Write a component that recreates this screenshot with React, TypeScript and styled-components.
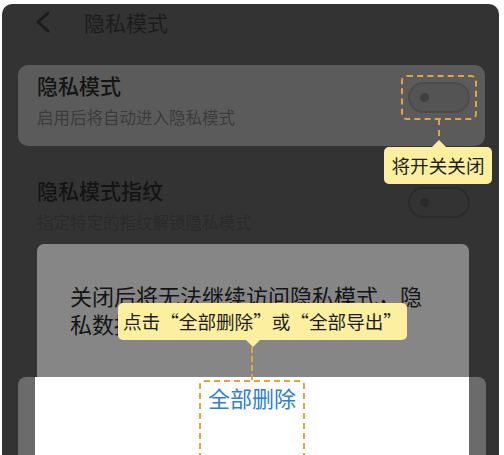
import React from "react";
import styled, { createGlobalStyle, css } from "styled-components";

const GlobalStyle = createGlobalStyle`
  html, body { margin: 0; padding: 0; background: #ffffff; }
  body { font-family: "Noto Sans CJK SC", "Noto Sans", sans-serif; }
  * { box-sizing: border-box; }
`;

const ORANGE = "#e2a445";
const YELLOW = "#fcefa0";

const Screen = styled.div`
  position: relative;
  margin: 4px 5px 0 2px;
  height: 451px;
  background: #333333;
  border-radius: 10px 10px 0 0;
  overflow: hidden;
`;

const Header = styled.div`
  display: flex;
  align-items: center;
  height: 36px;
  padding-left: 33px;
  gap: 33px;
`;

const Title = styled.div`
  font-size: 21px;
  line-height: 28px;
  color: #1c1c1c;
`;

const SettingCard = styled.div<{ $active?: boolean }>`
  display: flex;
  justify-content: space-between;
  align-items: flex-start;
  margin: ${(p) => (p.$active ? "25px" : "24px")} 14px 0 16px;
  padding: 6px 8px 17px 19px;
  border-radius: 10px;
  background: ${(p) => (p.$active ? "#5b5b5b" : "transparent")};
`;

const TextBlock = styled.div`
  display: flex;
  flex-direction: column;
`;

const ItemTitle = styled.div`
  font-size: 21px;
  line-height: 28px;
  font-weight: 500;
  color: #141414;
`;

const ItemSub = styled.div<{ $active?: boolean }>`
  margin-top: 6px;
  font-size: 16.5px;
  line-height: 24px;
  color: ${(p) => (p.$active ? "#3c3c3c" : "#2a2a2a")};
`;

const Highlight = styled.div<{ $on?: boolean }>`
  position: relative;
  margin-top: 4px;
  padding: 5px 5px;
  border: 2px dashed ${(p) => (p.$on ? ORANGE : "transparent")};
  border-radius: 6px;
`;

const Switch = styled.div<{ $active?: boolean }>`
  position: relative;
  width: 62px;
  height: 31px;
  border-radius: 16px;
  border: 2px solid ${(p) => (p.$active ? "#4c4c4c" : "#2b2b2b")};
  background: ${(p) => (p.$active ? "#545454" : "#333333")};
  &::after {
    content: "";
    position: absolute;
    left: 10px;
    top: 50%;
    width: 9px;
    height: 9px;
    margin-top: -4.5px;
    border-radius: 50%;
    background: ${(p) => (p.$active ? "#404040" : "#2a2a2a")};
  }
`;

const Connector = styled.div<{ $left: number; $top: number; $h: number }>`
  position: absolute;
  left: ${(p) => p.$left}px;
  top: ${(p) => p.$top}px;
  height: ${(p) => p.$h}px;
  border-left: 2px dashed ${ORANGE};
`;

const Tooltip = styled.div<{
  $left: number;
  $top: number;
  $w: number;
  $arrow: "up" | "down";
  $arrowX: number;
}>`
  position: absolute;
  z-index: 3;
  left: ${(p) => p.$left}px;
  top: ${(p) => p.$top}px;
  width: ${(p) => p.$w}px;
  height: 37px;
  text-align: center;
  background: ${YELLOW};
  border-radius: 5px;
  color: #1e1e1e;
  font-size: 18.6px;
  line-height: 36px;
  white-space: nowrap;
  &::before {
    content: "";
    position: absolute;
    left: ${(p) => p.$arrowX - 7}px;
    border-left: 7px solid transparent;
    border-right: 7px solid transparent;
    ${(p) =>
      p.$arrow === "up"
        ? css`
            top: -7px;
            border-bottom: 7px solid ${YELLOW};
          `
        : css`
            bottom: -7px;
            border-top: 7px solid ${YELLOW};
          `}
  }
`;

const Dialog = styled.div`
  position: absolute;
  left: 35px;
  right: 30px;
  top: 240px;
  bottom: 0;
  padding: 37px 33px 0 33px;
  background: #868686;
  border-radius: 7px 7px 0 0;
  font-size: 22px;
  line-height: 28px;
  color: #141414;
`;

const BottomSheet = styled.div`
  position: absolute;
  left: 16px;
  right: 13px;
  top: 373px;
  bottom: 0;
  display: flex;
  padding: 0 17px;
  background: #6b6b6b;
  border-radius: 8px 8px 0 0;
`;

const SheetBody = styled.div`
  flex: 1;
  display: flex;
  justify-content: center;
  align-items: flex-start;
  padding-top: 3px;
  background: #ffffff;
`;

const ActionBox = styled.div`
  position: relative;
  height: 110px;
  padding: 1px 7px 0;
  border: 2px dashed ${ORANGE};
  border-radius: 5px 5px 0 0;
`;

const ActionText = styled.div`
  font-size: 22px;
  line-height: 28px;
  color: #2e7fd2;
`;

export default function App() {
  return (
    <>
      <GlobalStyle />
      <Screen lang="zh-CN">
        <Header>
          <svg width="16" height="22" viewBox="0 0 16 22" fill="none">
            <path d="M13 2 L3 11 L13 20" stroke="#1b1b1b" strokeWidth="2.8" strokeLinecap="round" strokeLinejoin="round" />
          </svg>
          <Title>隐私模式</Title>
        </Header>

        <SettingCard $active>
          <TextBlock>
            <ItemTitle>隐私模式</ItemTitle>
            <ItemSub $active>启用后将自动进入隐私模式</ItemSub>
          </TextBlock>
          <Highlight $on>
            <Switch $active />
            <Connector $left={35} $top={42} $h={28} />
            <Tooltip $left={-19} $top={70} $w={108} $arrow="up" $arrowX={55}>
              将开关关闭
            </Tooltip>
          </Highlight>
        </SettingCard>

        <SettingCard>
          <TextBlock>
            <ItemTitle>隐私模式指纹</ItemTitle>
            <ItemSub>指定特定的指纹解锁隐私模式</ItemSub>
          </TextBlock>
          <Highlight>
            <Switch />
          </Highlight>
        </SettingCard>

        <Dialog>关闭后将无法继续访问隐私模式，隐私数据需要删除或导出。</Dialog>

        <BottomSheet>
          <SheetBody>
            <ActionBox>
              <ActionText>全部删除</ActionText>
              <Connector $left={50} $top={-35} $h={33} />
              <Tooltip $left={-83} $top={-79} $w={289} $arrow="down" $arrowX={135}>
                点击“全部删除”或“全部导出”
              </Tooltip>
            </ActionBox>
          </SheetBody>
        </BottomSheet>
      </Screen>
    </>
  );
}
